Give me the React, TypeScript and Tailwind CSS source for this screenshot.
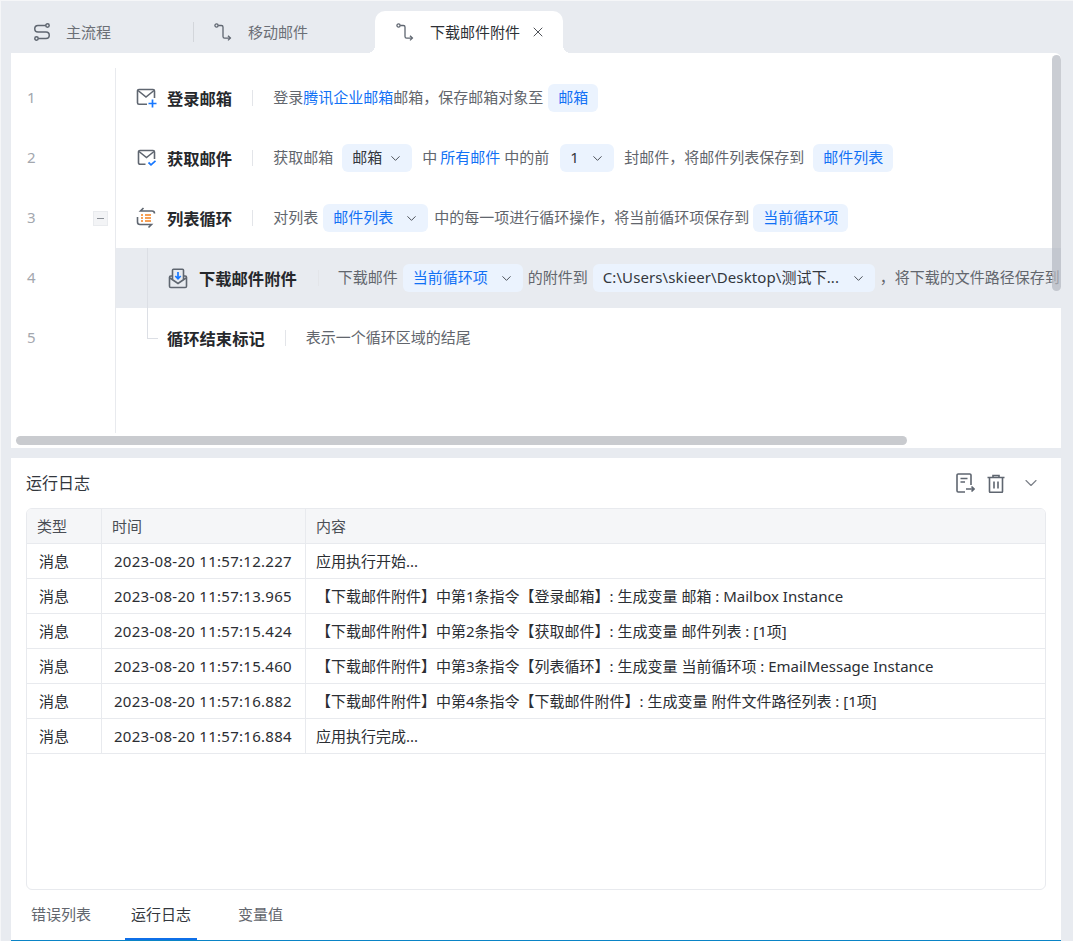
import { ChevronDown, X } from 'lucide-react';
import type { ReactNode } from 'react';

const FONT = "font-['Noto_Sans','Noto_Sans_CJK_SC',sans-serif]";

function RouteIcon({ className }: { className?: string }) {
    return (
        <svg width="18" height="18" viewBox="0 0 18 18" fill="none" stroke="#5f6670" strokeWidth="1.3" className={className}>
            <circle cx="2.5" cy="2.5" r="1.6" />
            <path d="M4.2 2.5h3.2a1.6 1.6 0 0 1 1.6 1.6v9.4a1.6 1.6 0 0 0 1.6 1.6h5.6" />
            <path d="M14 12.8l2.4 2.3-2.4 2.3" />
        </svg>
    );
}

function FlowIcon() {
    return (
        <svg width="18" height="18" viewBox="0 0 18 18" fill="none" stroke="#5f6670" strokeWidth="1.5">
            <circle cx="14.500" cy="2.500" r="1.700" />
            <circle cx="3.500" cy="15.500" r="1.700" />
            <path d="M12.800 2.500H5a3.200 3.200 0 0 0 0 6.500h8a3.200 3.200 0 0 1 0 6.500H5.200" />
        </svg>
    );
}

function MailPlusIcon() {
    return (
        <svg width="22" height="20" viewBox="0 0 22 20" fill="none" strokeWidth="1.6">
            <path d="M11 16.300H3A1.500 1.500 0 0 1 1.500 14.800V3A1.500 1.500 0 0 1 3 1.500h14A1.500 1.500 0 0 1 18.500 3v7" stroke="#5f6670" />
            <path d="M2 2.500l8 6.500 8-6.500" stroke="#5f6670" />
            <path d="M16.500 11.500v8M12.500 15.500h8" stroke="#1677ff" strokeWidth="1.7" />
        </svg>
    );
}

function MailCheckIcon() {
    return (
        <svg width="20" height="18" viewBox="0 0 20 18" fill="none" strokeWidth="1.6" className="ml-px">
            <path d="M8.500 15.300H3A1.500 1.500 0 0 1 1.500 13.800V3A1.500 1.500 0 0 1 3 1.500h13A1.500 1.500 0 0 1 17.500 3v7" stroke="#5f6670" />
            <path d="M2 2.500l7.500 6 7.500-6" stroke="#5f6670" />
            <path d="M11.500 13.500l2.500 2.300 4.500-4" stroke="#1677ff" strokeWidth="1.7" />
        </svg>
    );
}

function LoopIcon() {
    return (
        <svg width="20" height="22" viewBox="0 0 20 22" fill="none" strokeWidth="1.6">
            <path d="M7.500 1L4.500 4h11.500a2.500 2.500 0 0 1 2.500 2.500" stroke="#5f6670" />
            <path d="M1.500 10v5a2.500 2.500 0 0 0 2.500 2.500h11.500l-3 3" stroke="#5f6670" />
            <path d="M5 8h2M9 8h6M5 11h2M9 11h6M5 14h2M9 14h6" stroke="#f5811f" strokeWidth="1.6" />
        </svg>
    );
}

function DownloadMailIcon() {
    return (
        <svg width="20" height="21" viewBox="0 0 20 21" fill="none" strokeWidth="1.6">
            <path d="M4 8H2.800A1.300 1.300 0 0 0 1.500 9.300v8.900a1.300 1.300 0 0 0 1.300 1.300h14.400a1.300 1.300 0 0 0 1.300-1.300V9.300A1.300 1.300 0 0 0 17.200 8H16" stroke="#5f6670" />
            <path d="M4.500 11V2.300a1 1 0 0 1 1-1h9a1 1 0 0 1 1 1V11" stroke="#5f6670" />
            <path d="M2 10l8 5.500 8-5.500" stroke="#5f6670" />
            <path d="M10 4v6.500M7.300 8l2.700 2.800L12.700 8" stroke="#1677ff" strokeWidth="1.700" />
        </svg>
    );
}

function ExportLogIcon() {
    return (
        <svg width="19" height="20" viewBox="0 0 19 20" fill="none" stroke="#5f6670" strokeWidth="1.6">
            <path d="M9 19H2.200A1.200 1.200 0 0 1 1 17.800V2.200A1.200 1.200 0 0 1 2.200 1h11.600A1.200 1.200 0 0 1 15 2.200V12" />
            <path d="M4.500 5.500h7M4.500 9h4.500" />
            <path d="M10 16h8M15.500 13.500L18 16l-2.500 2.500" />
        </svg>
    );
}

function TrashIcon() {
    return (
        <svg width="18" height="19" viewBox="0 0 18 19" fill="none" stroke="#5f6670" strokeWidth="1.6">
            <path d="M0.500 3.500h17M6 3.500V1.500h6v2M2.500 3.500v14a.8.8 0 0 0 .8.8h11.400a.8.8 0 0 0 .8-.8v-14" />
            <path d="M7 7.500v7M11 7.500v7" />
        </svg>
    );
}

function Chip({ children, dropdown, blue, className }: { children: ReactNode; dropdown?: boolean; blue?: boolean; className: string }) {
    return (
        <span className={`flex h-7 shrink-0 items-center justify-between rounded-md bg-[#ebf3fe] pl-[10px] ${dropdown ? 'pr-[9px]' : 'pr-[10px]'} ${blue ? 'text-[#1271f5]' : 'text-[#33373d]'} ${className}`}>
            <span className="-translate-y-px">{children}</span>
            {dropdown && <ChevronDown size={15} strokeWidth={1.6} className="text-[#4b5058]" />}
        </span>
    );
}

function Sep({ className }: { className: string }) {
    return <span className={`h-4 w-px shrink-0 bg-[#e3e5e9] ${className}`} />;
}

const Txt = ({ children, className }: { children: ReactNode; className?: string }) => (
    <span className={`-translate-y-px ${className ?? ''}`}>{children}</span>
);

const Link = ({ children, className }: { children: ReactNode; className?: string }) => (
    <span className={`-translate-y-px text-[#1271f5] ${className ?? ''}`}>{children}</span>
);

function StepRow({ num, icon, title, toggle, active, indent, children }: { num: number; icon?: ReactNode; title: string; toggle?: boolean; active?: boolean; indent?: string; children: ReactNode }) {
    return (
        <div className="flex h-[60px] items-center">
            <div className="relative flex h-full w-[104px] shrink-0 items-center pl-[16px] text-[15px] text-[#a3a7ae]">
                <span className="-translate-y-px">{num}</span>
                {toggle && (
                    <span className="absolute left-[82px] top-[23px] flex h-[15px] w-[15px] items-center justify-center border border-[#e9ebee] bg-[#f3f4f6]">
                        <span className="h-px w-[7px] bg-[#8a8f96]" />
                    </span>
                )}
            </div>
            <div className={`flex h-full min-w-0 flex-1 items-center overflow-hidden whitespace-nowrap border-l border-[#e8eaee] text-[15px] text-[#62666d] ${active ? 'bg-[#e8ebf0]' : ''} ${indent ?? ''}`}>
                {icon && <span className="flex w-[31px] shrink-0 items-center">{icon}</span>}
                <span className="translate-y-px text-[16.3px] font-bold text-[#26282c]">{title}</span>
                {children}
            </div>
        </div>
    );
}

const logs = [
    ['2023-08-20 11:57:12.227', '应用执行开始...'],
    ['2023-08-20 11:57:13.965', '【下载邮件附件】中第1条指令【登录邮箱】: 生成变量 邮箱 : Mailbox Instance'],
    ['2023-08-20 11:57:15.424', '【下载邮件附件】中第2条指令【获取邮件】: 生成变量 邮件列表 : [1项]'],
    ['2023-08-20 11:57:15.460', '【下载邮件附件】中第3条指令【列表循环】: 生成变量 当前循环项 : EmailMessage Instance'],
    ['2023-08-20 11:57:16.882', '【下载邮件附件】中第4条指令【下载邮件附件】: 生成变量 附件文件路径列表 : [1项]'],
    ['2023-08-20 11:57:16.884', '应用执行完成...'],
];

export default function App() {
    return (
        <div className={`flex h-[941px] w-[1073px] flex-col overflow-hidden border-l border-t border-[#f5f6f8] bg-[#e8ebf0] pl-[10px] pr-[12px] ${FONT}`}>
            {/* Tabs */}
            <div className="flex h-[52px] shrink-0 items-end text-[15px]">
                <div className="flex h-[42px] w-[182px] shrink-0 items-center pl-[22px] text-[#6b6f76]">
                    <FlowIcon />
                    <span className="ml-[15px]">主流程</span>
                </div>
                <span className="mb-[11px] h-5 w-px shrink-0 bg-[#d3d6db]" />
                <div className="flex h-[42px] w-[181px] shrink-0 items-center pl-[20px] text-[#6b6f76]">
                    <RouteIcon />
                    <span className="ml-[16px]">移动邮件</span>
                </div>
                <div className="relative flex h-[42px] w-[188px] shrink-0 items-center rounded-t-[10px] bg-white pl-[21px] text-[#2e3136]">
                    <span className="absolute bottom-0 left-[-8px] h-2 w-2 bg-[radial-gradient(circle_at_0_0,transparent_8px,white_8px)]" />
                    <span className="absolute bottom-0 right-[-8px] h-2 w-2 bg-[radial-gradient(circle_at_100%_0,transparent_8px,white_8px)]" />
                    <RouteIcon />
                    <span className="ml-[16px]">下载邮件附件</span>
                    <X size={16} strokeWidth={1.3} className="ml-[10px] text-[#33373d]" />
                </div>
            </div>

            {/* Flow editor */}
            <div className="relative h-[395px] shrink-0 overflow-hidden rounded-tr-md bg-white pt-[15px]">
                <StepRow num={1} icon={<MailPlusIcon />} title="登录邮箱" indent="pl-[20px]">
                    <Sep className="ml-[20px]" />
                    <Txt className="ml-[20px]">登录</Txt>
                    <Link>腾讯企业邮箱</Link>
                    <Txt>邮箱，保存邮箱对象至</Txt>
                    <Chip blue className="ml-[5px] w-[50px]">邮箱</Chip>
                </StepRow>
                <StepRow num={2} icon={<MailCheckIcon />} title="获取邮件" indent="pl-[20px]">
                    <Sep className="ml-[20px]" />
                    <Txt className="ml-[20px]">获取邮箱</Txt>
                    <Chip dropdown className="ml-[9px] w-[70px]">邮箱</Chip>
                    <Txt className="ml-[10px]">中</Txt>
                    <Link className="ml-[3px]">所有邮件</Link>
                    <Txt className="ml-[4px]">中的前</Txt>
                    <Chip dropdown className="ml-[11px] w-[54px]">1</Chip>
                    <Txt className="ml-[10px]">封邮件，将邮件列表保存到</Txt>
                    <Chip blue className="ml-[9px] w-[80px]">邮件列表</Chip>
                </StepRow>
                <StepRow num={3} icon={<LoopIcon />} title="列表循环" toggle indent="pl-[20px]">
                    <Sep className="ml-[20px]" />
                    <Txt className="ml-[20px]">对列表</Txt>
                    <Chip blue dropdown className="ml-[5px] w-[105px]">邮件列表</Chip>
                    <Txt className="ml-[6px]">中的每一项进行循环操作，将当前循环项保存到</Txt>
                    <Chip blue className="ml-[4px] w-[95px]">当前循环项</Chip>
                </StepRow>
                <StepRow num={4} icon={<DownloadMailIcon />} title="下载邮件附件" active indent="pl-[52px]">
                    <Sep className="ml-[21px]" />
                    <Txt className="ml-[19px]">下载邮件</Txt>
                    <Chip blue dropdown className="ml-[5px] w-[120px]">当前循环项</Chip>
                    <Txt className="ml-[5px]">的附件到</Txt>
                    <Chip dropdown className="ml-[5px] w-[282px] tracking-[0.1px]">C:\Users\skieer\Desktop\测试下...</Chip>
                    <Txt className="ml-[5px]">，将下载的文件路径保存到</Txt>
                </StepRow>
                <StepRow num={5} title="循环结束标记" indent="pl-[51px]">
                    <Sep className="ml-[20px]" />
                    <Txt className="ml-[20px]">表示一个循环区域的结尾</Txt>
                </StepRow>
                <div className="ml-[104px] h-[65px] border-l border-[#e8eaee]" />

                {/* Loop connector */}
                <span className="absolute left-[136px] top-[195px] h-[91px] w-[11px] border-b border-l border-[#dcdfe5]" />

                {/* Overlay scrollbars */}
                <span className="absolute left-[5px] top-[383px] h-[9px] w-[891px] rounded-full bg-[#c9cbcf]" />
                <span className="absolute right-0 top-[2px] h-[236px] w-[9px] rounded-full bg-[#b4b8c0]/70" />
            </div>

            {/* Log panel */}
            <div className="mt-[10px] flex min-h-0 flex-1 flex-col bg-white">
                <div className="flex h-[50px] shrink-0 items-center pl-[15px] pr-[20px]">
                    <span className="text-[16px] text-[#33373d]">运行日志</span>
                    <span className="ml-auto flex items-center">
                        <ExportLogIcon />
                        <span className="ml-[12px]"><TrashIcon /></span>
                        <ChevronDown size={20} strokeWidth={1.4} className="ml-[16px] text-[#7c8189]" />
                    </span>
                </div>
                <div className="mx-[15px] h-[382px] shrink-0 overflow-hidden rounded-md border border-[#e8eaee] text-[15px] text-[#2b2e33]">
                    <div className="grid h-[35px] grid-cols-[75px_204px_1fr] border-b border-[#e8eaee] bg-[#f5f6f8] text-[#4a4e55]">
                        <div className="flex items-center border-r border-[#e8eaee] pl-[10px]">类型</div>
                        <div className="flex items-center border-r border-[#e8eaee] pl-[10px]">时间</div>
                        <div className="flex items-center pl-[10px]">内容</div>
                    </div>
                    {logs.map(([time, text]) => (
                        <div key={time} className="grid h-[35px] grid-cols-[75px_204px_1fr] border-b border-[#e8eaee]">
                            <div className="flex items-center border-r border-[#e8eaee] pl-[12px]">消息</div>
                            <div className="flex items-center border-r border-[#e8eaee] pl-[12px] tracking-[0.28px]">{time}</div>
                            <div className="flex items-center whitespace-nowrap pl-[10px]">{text}</div>
                        </div>
                    ))}
                </div>
                <div className="flex min-h-0 flex-1 items-stretch border-b border-[#0a84c6] pl-[14px] text-[15px] text-[#62666d]">
                    <div className="flex w-[100px] items-center pl-[6px]"><span className="-translate-y-px">错误列表</span></div>
                    <div className="flex w-[72px] items-center justify-center border-b-2 border-[#0f6fe8] text-[#33373d]">运行日志</div>
                    <div className="flex items-center pl-[41px]"><span className="-translate-y-px">变量值</span></div>
                </div>
            </div>
        </div>
    );
}
